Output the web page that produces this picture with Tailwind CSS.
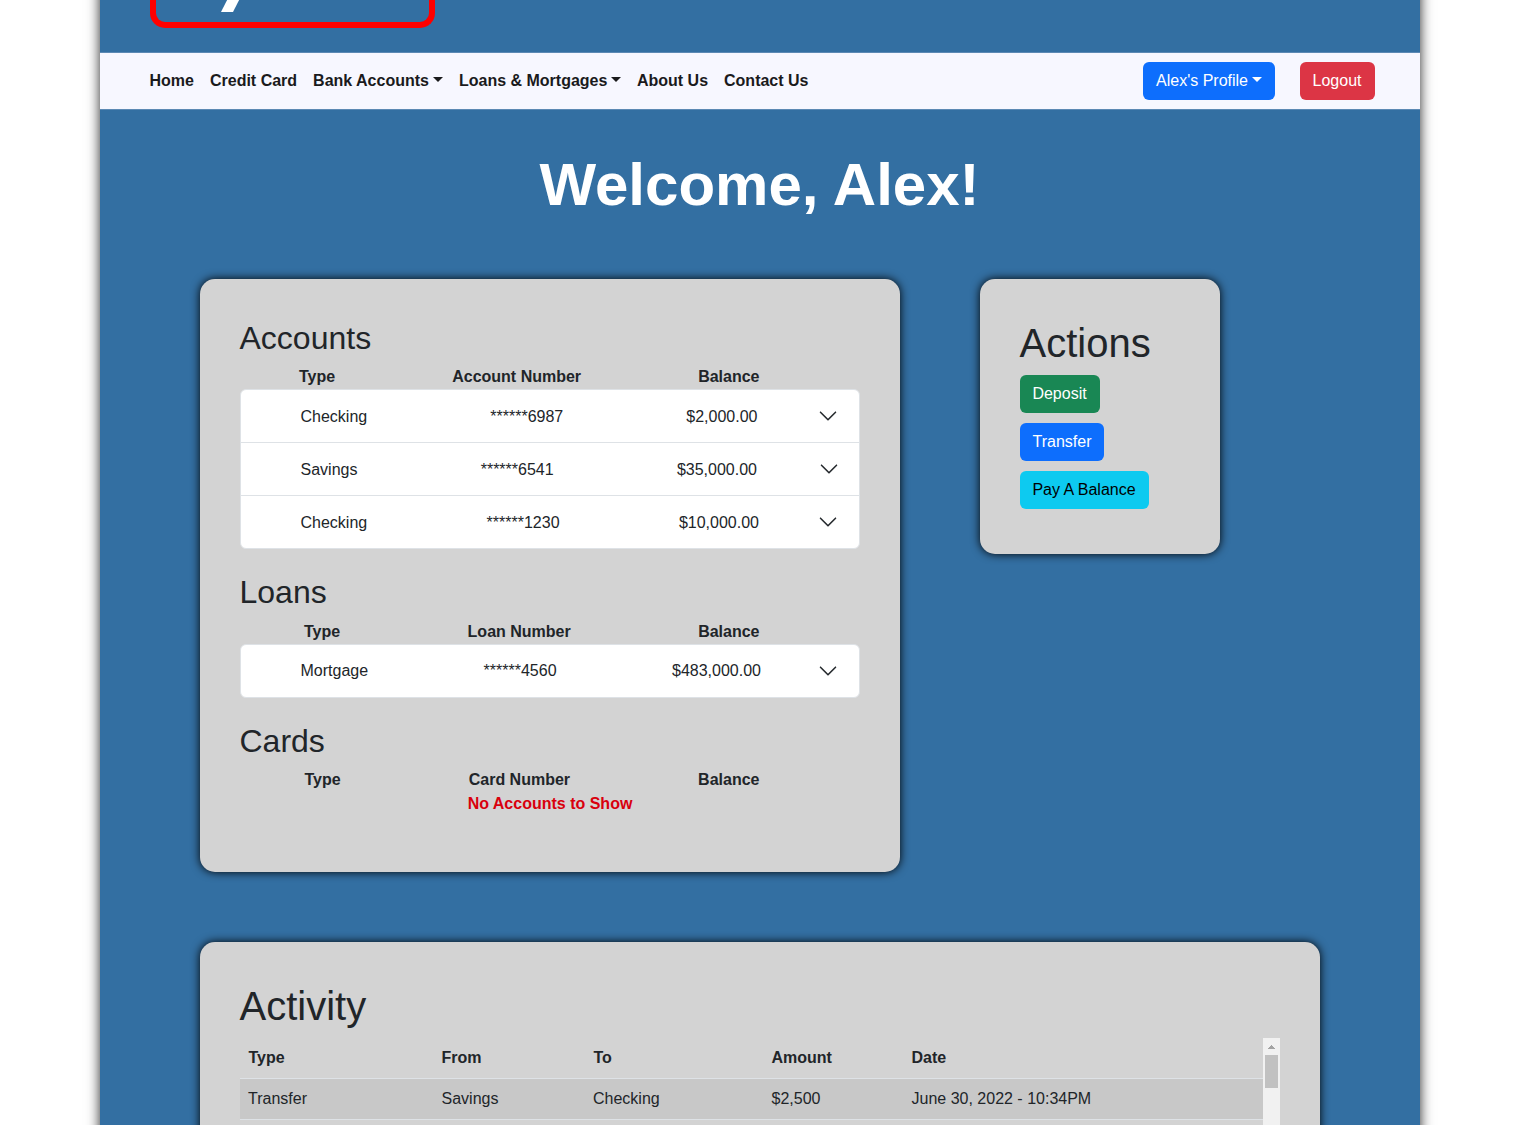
<!DOCTYPE html>
<html lang="en">
<head>
<meta charset="utf-8">
<title>Account Overview</title>
<script src="https://cdn.jsdelivr.net/npm/@tailwindcss/browser@4"></script>
</head>
<body class="h-[1125px] overflow-hidden bg-white font-['Liberation_Sans',Arial,sans-serif] text-base text-[#212529]">
<svg class="hidden"><symbol id="chev" viewBox="0 0 16 16"><path fill="#212529" stroke="#212529" stroke-width=".15" fill-rule="evenodd" d="M1.646 4.646a.5.5 0 0 1 .708 0L8 10.293l5.646-5.647a.5.5 0 0 1 .708.708l-6 6a.5.5 0 0 1-.708 0l-6-6a.5.5 0 0 1 0-.708z"/></symbol></svg>
<div class="-mt-5 ml-[100px] flow-root h-[1165px] w-[1320px] bg-[#336fa2] shadow-[0_0_12px_rgba(0,0,0,0.85)]">
  <header class="h-[72px] pl-[50px]">
    <div class="flex h-12 w-[285px] items-start overflow-hidden rounded-b-[15px] border-x-6 border-b-6 border-[#f00] pl-[65px]">
      <div class="h-8 w-[12px] origin-bottom -skew-x-[27deg] bg-white"></div>
    </div>
  </header>
  <nav class="flex h-[58px] items-center border-y border-[#5c89b4] bg-[#f7f7ff] pr-[45px] pl-[49.5px] font-bold text-[#1a1a1c]">
    <div class="flex flex-1 gap-4">
      <a>Home</a><a>Credit Card</a>
      <a class="flex">Bank Accounts<span class="mt-[8px] ml-1 h-0 w-0 border-x-5 border-t-5 border-x-transparent border-t-[#1a1a1c]"></span></a>
      <a class="flex">Loans &amp; Mortgages<span class="mt-[8px] ml-1 h-0 w-0 border-x-5 border-t-5 border-x-transparent border-t-[#1a1a1c]"></span></a>
      <a class="-ml-[0.5px]">About Us</a><a>Contact Us</a>
    </div>
    <button class="mr-[25px] flex h-[38px] w-[132px] items-center rounded-md bg-[#0d6efd] pl-[13px] font-normal text-white">Alex's Profile<span class="-mt-[3px] ml-1 h-0 w-0 border-x-5 border-t-5 border-x-transparent border-t-white"></span></button>
    <button class="h-[38px] w-[75px] rounded-md bg-[#dc3545] pr-px font-normal text-white">Logout</button>
  </nav>
  <h1 class="mt-[39px] pr-px text-center text-[60px] leading-[72px] font-bold text-white">Welcome, Alex!</h1>
  <div class="mt-[58px] flex items-start gap-20 pl-[100px]">
    <section class="h-[593px] w-[700px] rounded-[15px] bg-[#d3d3d3] p-10 shadow-[0_0_10px_#000]">
      <h2 class="mb-2 -ml-[0.5px] text-[32px] leading-[38.4px]">Accounts</h2>
      <div class="ml-[59px] flex w-[460.5px] justify-between font-bold"><span>Type</span><span>Account Number</span><span>Balance</span></div>
      <div class="divide-y divide-[#dee2e6] rounded-md border border-[#dee2e6] bg-white">
        <div class="flex h-[53px] items-center pl-[59.5px]"><div class="flex w-[457px] justify-between pt-px"><span>Checking</span><span>******6987</span><span>$2,000.00</span></div><svg class="ml-[60.5px] size-5"><use href="#chev"/></svg></div>
        <div class="flex h-[53px] items-center pl-[59.5px]"><div class="flex w-[456.5px] justify-between pt-px"><span>Savings</span><span>******6541</span><span>$35,000.00</span></div><svg class="ml-[62px] size-5"><use href="#chev"/></svg></div>
        <div class="flex h-[52px] items-center pl-[59.5px]"><div class="flex w-[458.5px] justify-between pt-px"><span>Checking</span><span>******1230</span><span>$10,000.00</span></div><svg class="ml-[59px] size-5"><use href="#chev"/></svg></div>
      </div>
      <h2 class="mt-6 mb-2 -ml-[0.5px] text-[32px] leading-[38.4px]">Loans</h2>
      <div class="ml-[64px] flex w-[455.5px] justify-between font-bold"><span>Type</span><span>Loan Number</span><span>Balance</span></div>
      <div class="rounded-md border border-[#dee2e6] bg-white">
        <div class="flex h-[52px] items-center pl-[59.5px]"><div class="flex w-[460.5px] justify-between"><span>Mortgage</span><span>******4560</span><span>$483,000.00</span></div><svg class="ml-[57px] size-5"><use href="#chev"/></svg></div>
      </div>
      <h2 class="mt-6 mb-2 -ml-[0.5px] text-[32px] leading-[38.4px]">Cards</h2>
      <div class="ml-[64.5px] flex w-[455px] justify-between font-bold"><span>Type</span><span>Card Number</span><span>Balance</span></div>
      <p class="text-center font-bold text-[#d9000d]">No Accounts to Show</p>
    </section>
    <section class="flex h-[275px] w-60 flex-col items-start gap-2.5 rounded-[15px] bg-[#d3d3d3] p-10 shadow-[0_0_10px_#000]">
      <h2 class="-mb-0.5 -ml-[0.5px] text-[40px] leading-[48px]">Actions</h2>
      <button class="h-[38px] w-20 rounded-md bg-[#198754] pr-px text-white">Deposit</button>
      <button class="h-[38px] w-[84px] rounded-md bg-[#0d6efd] text-white">Transfer</button>
      <button class="h-[38px] w-[129px] rounded-md bg-[#0dcaf0] pr-px text-black">Pay A Balance</button>
    </section>
  </div>
  <section class="mt-[70px] ml-[100px] h-[203px] w-[1120px] rounded-t-[15px] bg-[#d3d3d3] px-10 pt-10 shadow-[0_0_10px_#000]">
    <h2 class="mb-2 -ml-[0.5px] text-[40px] leading-[48px]">Activity</h2>
    <div class="flex h-[107px]">
      <div class="flex-1">
        <div class="grid h-[41px] grid-cols-[193px_152px_178px_140px_1fr] border-b border-[#dee2e6] py-2 pl-[8.5px] font-bold"><span>Type</span><span>From</span><span>To</span><span>Amount</span><span>Date</span></div>
        <div class="grid h-[41px] grid-cols-[193.5px_151.5px_178.5px_140px_1fr] border-b border-[#dee2e6] bg-[#c8c8c8] py-2 pl-2"><span>Transfer</span><span>Savings</span><span>Checking</span><span>$2,500</span><span>June 30, 2022 - 10:34PM</span></div>
      </div>
      <div class="flex w-[17px] flex-col items-center bg-[#f1f1f1]">
        <svg class="mt-[7px] h-1 w-[7px]" viewBox="0 0 7 4" shape-rendering="crispEdges"><path fill="#a3a3a3" d="M3 0h1v1h1v1h1v1h1v1H0V3h1V2h1V1h1z"/></svg>
        <div class="mt-1.5 h-[33px] w-[13px] bg-[#c1c1c1]"></div>
      </div>
    </div>
  </section>
</div>
</body>
</html>
